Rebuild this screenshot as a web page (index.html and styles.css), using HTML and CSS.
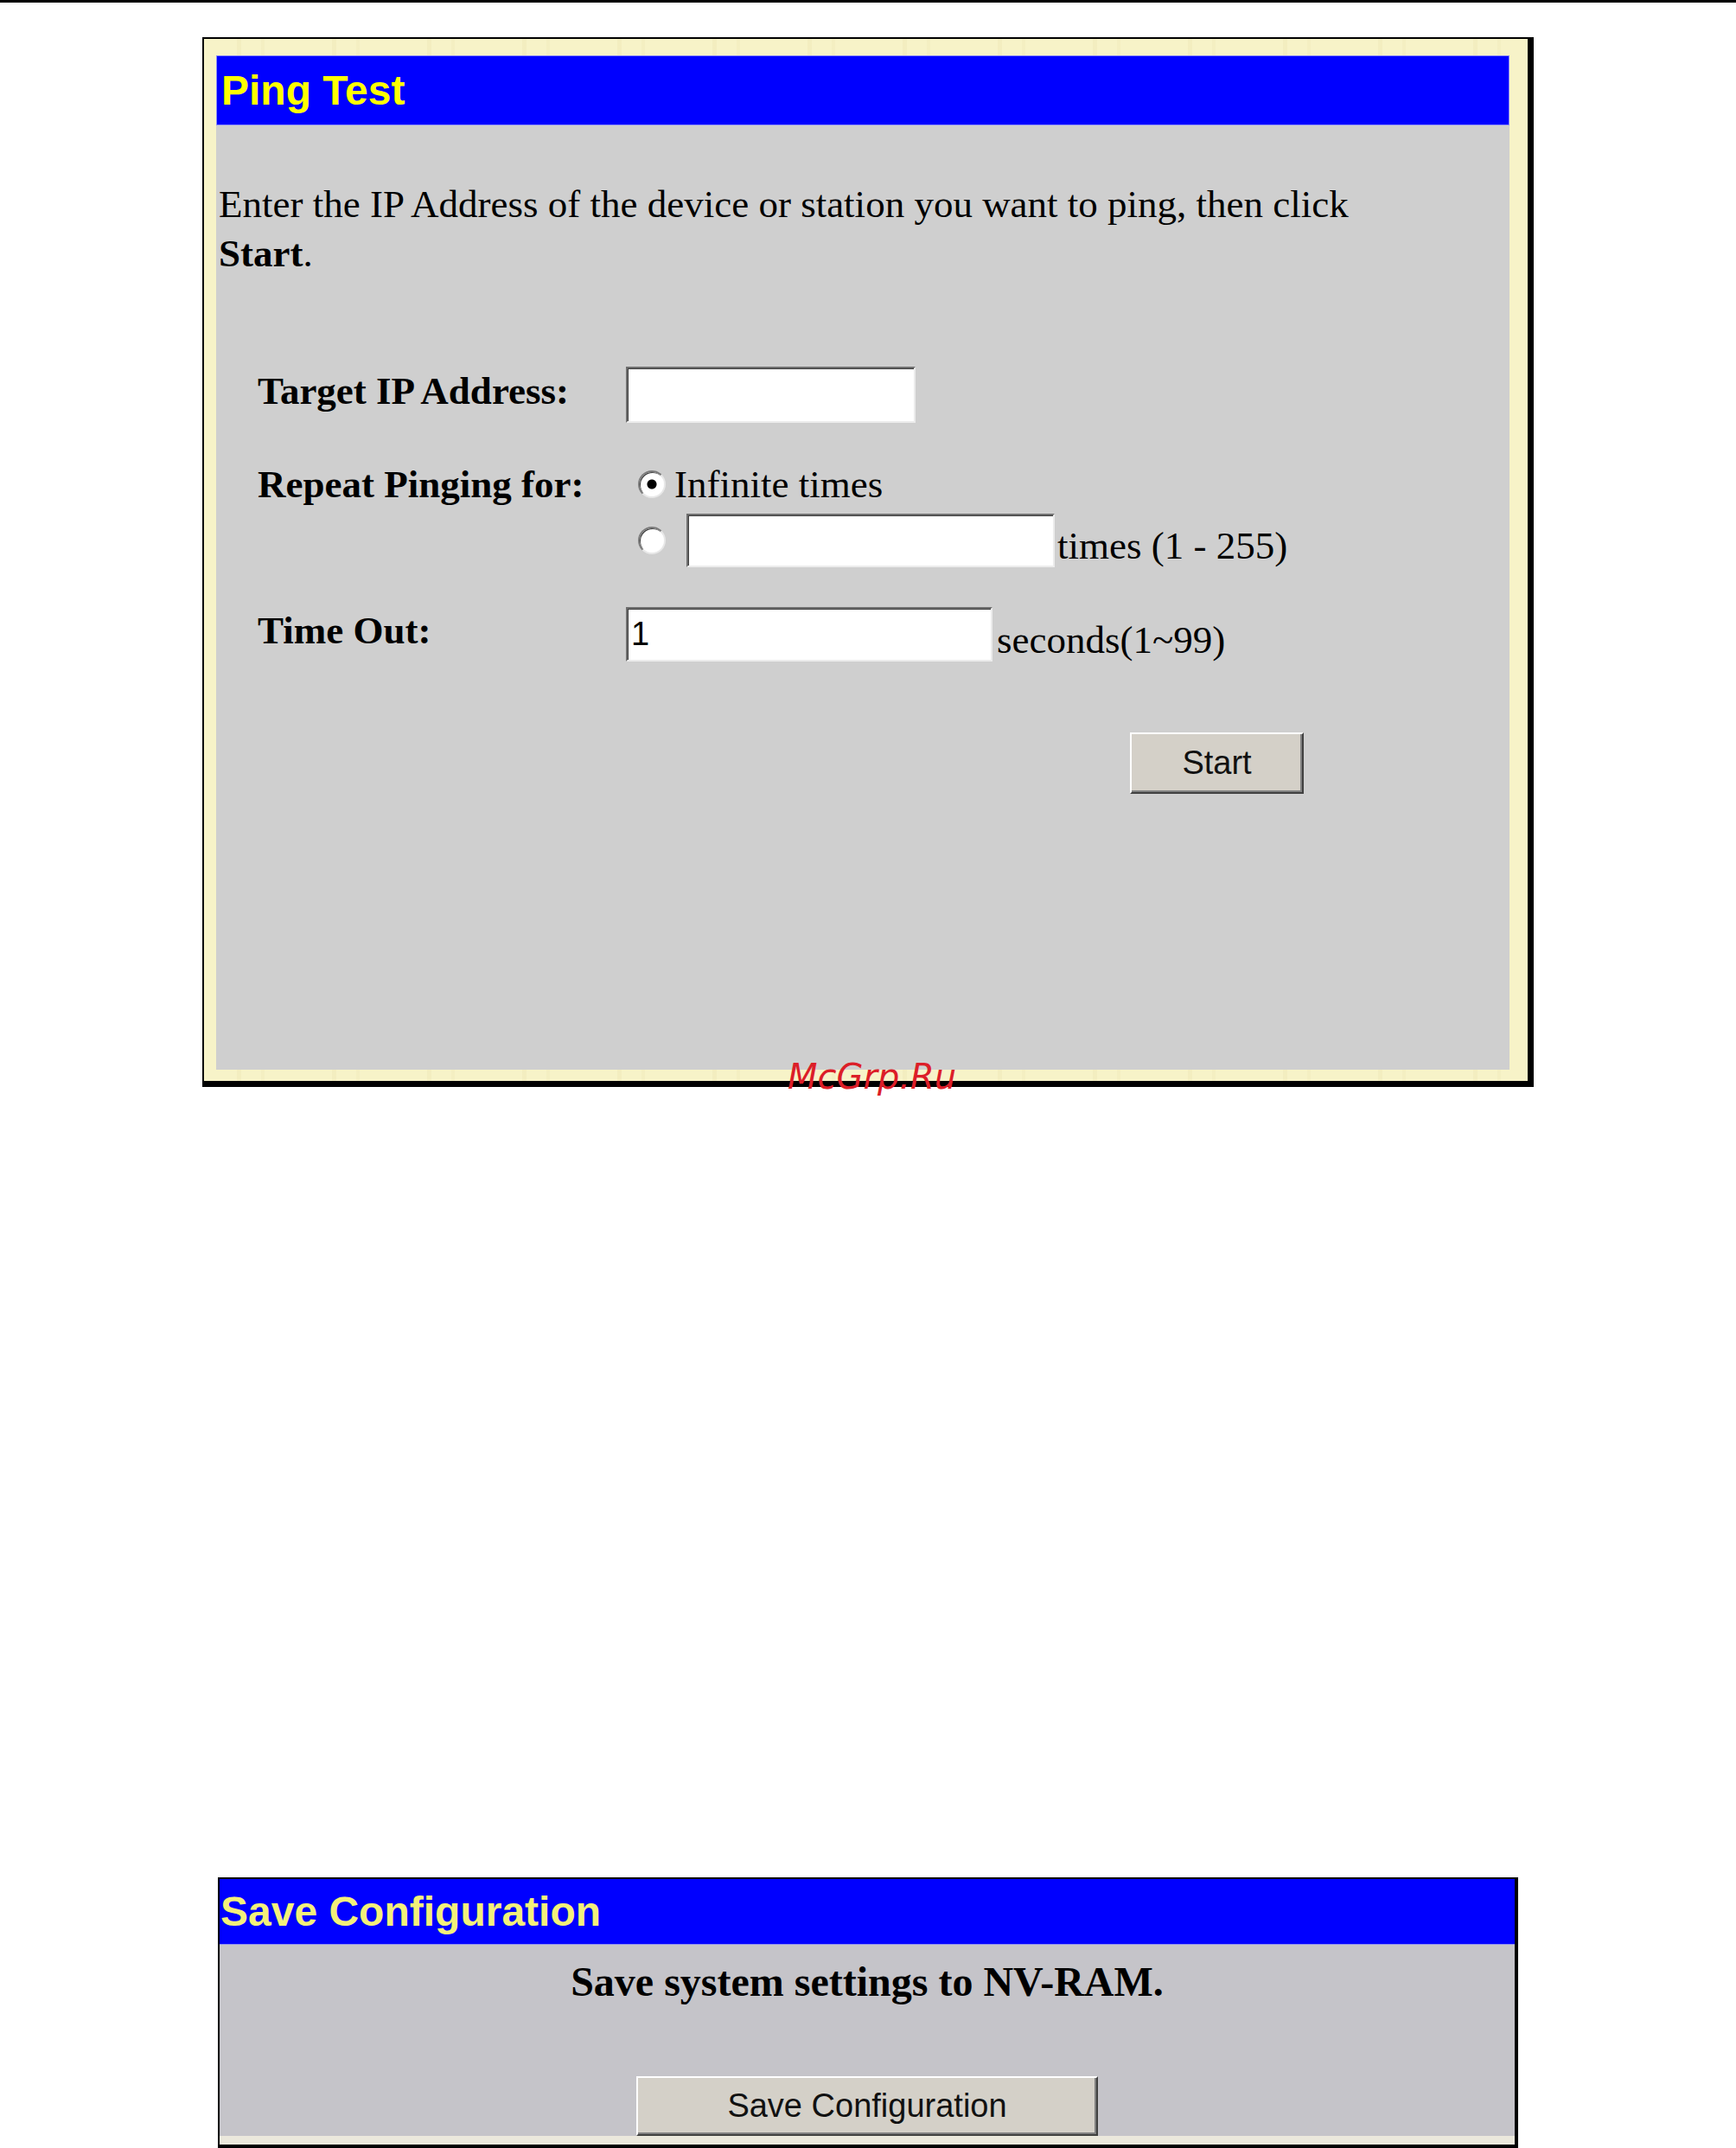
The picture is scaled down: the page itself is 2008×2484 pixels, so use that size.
FILE: index.html
```html
<!DOCTYPE html>
<html lang="en">
<head>
  <meta charset="UTF-8" />
  <title>Ping Test</title>
  <link rel="stylesheet" href="styles.css">
</head>
<body>
  <div class="rule"></div>

  <div class="panel ping">
    <div class="panel-head">Ping Test</div>
    <div class="panel-body">
      <p class="intro">Enter the IP Address of the device or station you want to ping, then click <b>Start</b>.</p>

      <form class="ping-form">
        <label class="field-label" for="target-ip">Target IP Address:</label>
        <div class="field">
          <input type="text" id="target-ip" class="txt txt-ip" />
        </div>

        <span class="field-label repeat-label">Repeat Pinging for:</span>
        <div class="field options">
          <label class="opt opt-first"><input type="radio" name="repeat" class="radio" checked />Infinite times</label>
          <label class="opt"><input type="radio" name="repeat" class="radio" /><input type="text" class="txt txt-count" /><span class="after">times (1 - 255)</span></label>
        </div>

        <label class="field-label" for="timeout">Time Out:</label>
        <div class="field">
          <input type="text" id="timeout" class="txt txt-timeout" value="1" /><span>seconds(1~99)</span>
        </div>

        <div class="actions">
          <button type="button" class="btn btn-start">Start</button>
        </div>
      </form>
    </div>
    <span class="watermark">McGrp.Ru</span>
  </div>

  <div class="panel save">
    <div class="panel-head">Save Configuration</div>
    <div class="panel-body">
      <p class="save-note">Save system settings to NV-RAM.</p>
      <button type="button" class="btn btn-save">Save Configuration</button>
    </div>
  </div>
</body>
</html>
```

FILE: styles.css
```css
body {
  margin: 0;
  background: #fff;
  font-family: "Liberation Serif", "Times New Roman", serif;
  color: #000;
}
.rule {
  height: 3px;
  background: #000;
}

/* shared panel pieces */
.panel {
  box-sizing: border-box;
}
.panel-head {
  box-sizing: border-box;
  background: #0000ff;
  font: bold 48px "Liberation Sans", Arial, sans-serif;
  white-space: nowrap;
}
.panel-body {
  box-sizing: border-box;
}

/* ping panel with the pale yellow frame */
.ping {
  position: relative;
  margin: 40px 0 0 234px;
  width: 1540px;
  border: 2px solid #000;
  border-right-width: 7px;
  border-bottom-width: 7px;
  padding: 19px 21px 13px 14px;
  background-color: #f7f3c8;
  background-image: repeating-linear-gradient(90deg, transparent 0 38px, rgba(222, 210, 150, 0.16) 38px 43px, transparent 43px 66px, rgba(222, 210, 150, 0.12) 66px 70px, transparent 70px 110px);
}
.ping .panel-head {
  height: 81px;
  line-height: 79px;
  padding-left: 5px;
  border: 1px solid #8e8ef6;
  color: #ffff00;
}
.ping .panel-body {
  height: 1092px;
  padding: 63px 0 0 3px;
  background: #cfcfcf;
}
.intro {
  margin: 0;
  max-width: 1380px;
  font-size: 45px;
  line-height: 57px;
}

.ping-form {
  display: grid;
  grid-template-columns: 426px 1fr;
  row-gap: 46px;
  margin: 102px 0 0 45px;
}
.field-label {
  align-self: center;
  padding-bottom: 10px;
  font-weight: bold;
  font-size: 45px;
  line-height: 50px;
  white-space: nowrap;
}
.repeat-label {
  align-self: start;
}
.field {
  display: flex;
  align-items: flex-end;
  font-size: 45px;
  line-height: 50px;
  white-space: nowrap;
}
.options {
  flex-direction: column;
  align-items: stretch;
  gap: 9px;
}
.opt {
  display: flex;
  align-items: flex-end;
}
.opt-first {
  align-items: center;
  height: 50px;
}
.after {
  margin-left: 3px;
}

/* classic sunken text boxes */
.txt {
  box-sizing: border-box;
  margin: 0;
  padding: 0 6px;
  border: 2px solid;
  border-color: #6e6e6e #ececec #ececec #6e6e6e;
  box-shadow: inset 1px 1px 0 #3c3c3c;
  background: #fff;
  font: 38px "Liberation Sans", Arial, sans-serif;
  color: #000;
  outline: none;
}
.txt-ip {
  width: 335px;
  height: 65px;
}
.txt-count {
  width: 426px;
  height: 62px;
  margin-left: 14px;
}
.txt-timeout {
  width: 424px;
  height: 63px;
  margin-right: 5px;
  padding-left: 4px;
}

.radio {
  appearance: none;
  box-sizing: border-box;
  flex: none;
  align-self: center;
  width: 32px;
  height: 32px;
  margin: 0 10px 0 14px;
  border-radius: 50%;
  border: 2px solid;
  border-color: #7a7a7a #e8e8e8 #e8e8e8 #7a7a7a;
  box-shadow: inset 1px 1px 0 #404040;
  background: #fff;
}
.radio:checked {
  background: radial-gradient(circle, #000 0 5px, #fff 6px);
}

/* raised buttons */
.btn {
  box-sizing: border-box;
  padding: 0;
  border: 2px solid;
  border-color: #fff #404040 #404040 #fff;
  box-shadow: inset -2px -2px 0 #808080;
  background: #d4d0c8;
  font: 38px "Liberation Sans", Arial, sans-serif;
  color: #111;
}
.actions {
  grid-column: 2;
  margin-top: 36px;
  padding-left: 583px;
}
.btn-start {
  width: 201px;
  height: 71px;
}

.watermark {
  position: absolute;
  left: 675px;
  top: 1180px;
  font: italic 40px/40px "DejaVu Sans", sans-serif;
  color: #dc1e28;
}

/* save configuration panel */
.save {
  margin: 914px 0 0 252px;
  width: 1504px;
  border: 2px solid #000;
  border-right-width: 4px;
  border-bottom-width: 4px;
  padding-bottom: 10px;
  background: #ebe8dc;
}
.save .panel-head {
  height: 76px;
  line-height: 75px;
  padding-left: 1px;
  border-bottom: 1px solid #8f8ff0;
  color: #f3f07a;
}
.save .panel-body {
  height: 221px;
  padding-top: 14px;
  background: #c5c4c9;
  text-align: center;
}
.save-note {
  margin: 0;
  font-weight: bold;
  font-size: 48px;
  line-height: 57px;
}
.btn-save {
  margin-top: 81px;
  width: 534px;
  height: 69px;
}
```
